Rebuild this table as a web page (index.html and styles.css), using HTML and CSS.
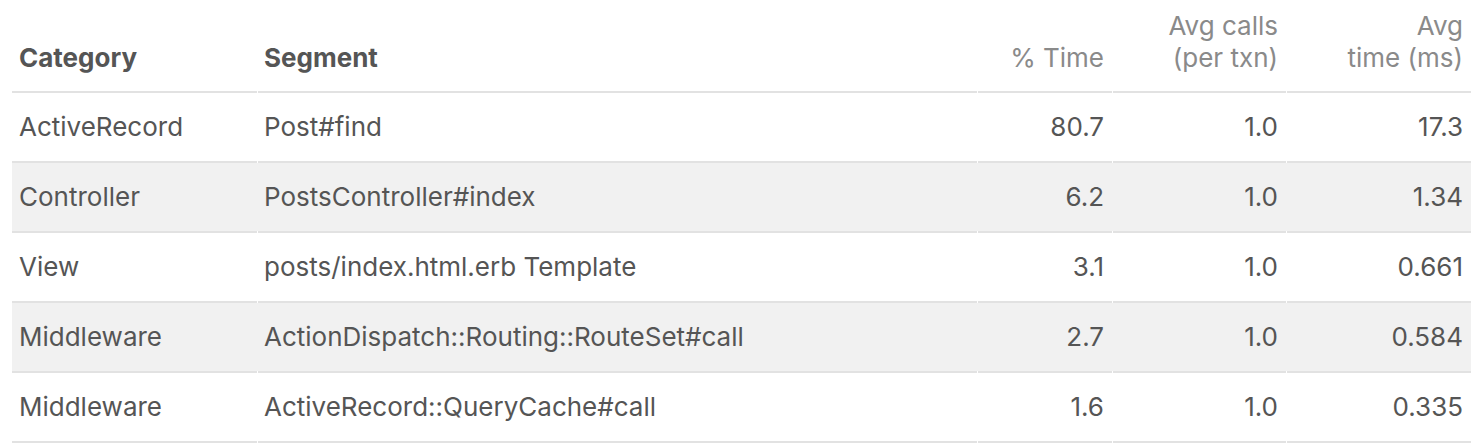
FILE: index.html
```html
<!DOCTYPE html>
<html>
<head>
<meta charset="utf-8">
<link rel="stylesheet" href="styles.css">
</head>
<body>
<table class="segments">
  <colgroup>
    <col class="col-cat">
    <col class="col-seg">
    <col class="col-pct">
    <col class="col-calls">
    <col class="col-avg">
  </colgroup>
  <thead>
    <tr>
      <th>Category</th>
      <th>Segment</th>
      <th class="num light">% Time</th>
      <th class="num light">Avg calls<br>(per txn)</th>
      <th class="num light">Avg<br>time (ms)</th>
    </tr>
  </thead>
  <tbody>
    <tr><td>ActiveRecord</td><td>Post#find</td><td class="num">80.7</td><td class="num">1.0</td><td class="num">17.3</td></tr>
    <tr class="alt"><td>Controller</td><td>PostsController#index</td><td class="num">6.2</td><td class="num">1.0</td><td class="num">1.34</td></tr>
    <tr><td>View</td><td>posts/index.html.erb Template</td><td class="num">3.1</td><td class="num">1.0</td><td class="num">0.661</td></tr>
    <tr class="alt"><td>Middleware</td><td>ActionDispatch::Routing::RouteSet#call</td><td class="num">2.7</td><td class="num">1.0</td><td class="num">0.584</td></tr>
    <tr><td>Middleware</td><td>ActiveRecord::QueryCache#call</td><td class="num">1.6</td><td class="num">1.0</td><td class="num">0.335</td></tr>
  </tbody>
</table>
</body>
</html>
```

FILE: styles.css
```css
html, body {
  margin: 0;
  padding: 0;
  background: #fff;
}
body {
  font-family: Inter, "Open Sans", sans-serif;
  color: #555;
}
.segments {
  margin-left: 12px;
  width: 1459px;
  table-layout: fixed;
  border-collapse: collapse;
  font-size: 26px;
}
.col-cat { width: 245px; }
.col-seg { width: 720px; }
.col-pct { width: 135px; }
.col-calls { width: 174px; }
.col-avg { width: 185px; }
.segments th,
.segments td {
  position: relative;
  border-bottom: 2px solid #e2e2e2;
  text-align: left;
  padding: 0 7px;
  white-space: nowrap;
}
.segments th + th::before,
.segments td + td::before {
  content: "";
  position: absolute;
  left: 0;
  bottom: -2px;
  width: 1px;
  height: 2px;
  background: #fff;
}
.segments th {
  height: 92px;
  box-sizing: border-box;
  vertical-align: bottom;
  padding-bottom: 17px;
  font-weight: 700;
  line-height: 32px;
}
.segments th.light {
  font-weight: 400;
  color: #8a8a8a;
}
.segments td {
  height: 70px;
  box-sizing: border-box;
  vertical-align: middle;
  font-weight: 400;
  line-height: 32px;
}
.segments .num {
  text-align: right;
  padding-right: 8px;
}
.segments tr.alt td {
  background: #f1f1f1;
}
```
